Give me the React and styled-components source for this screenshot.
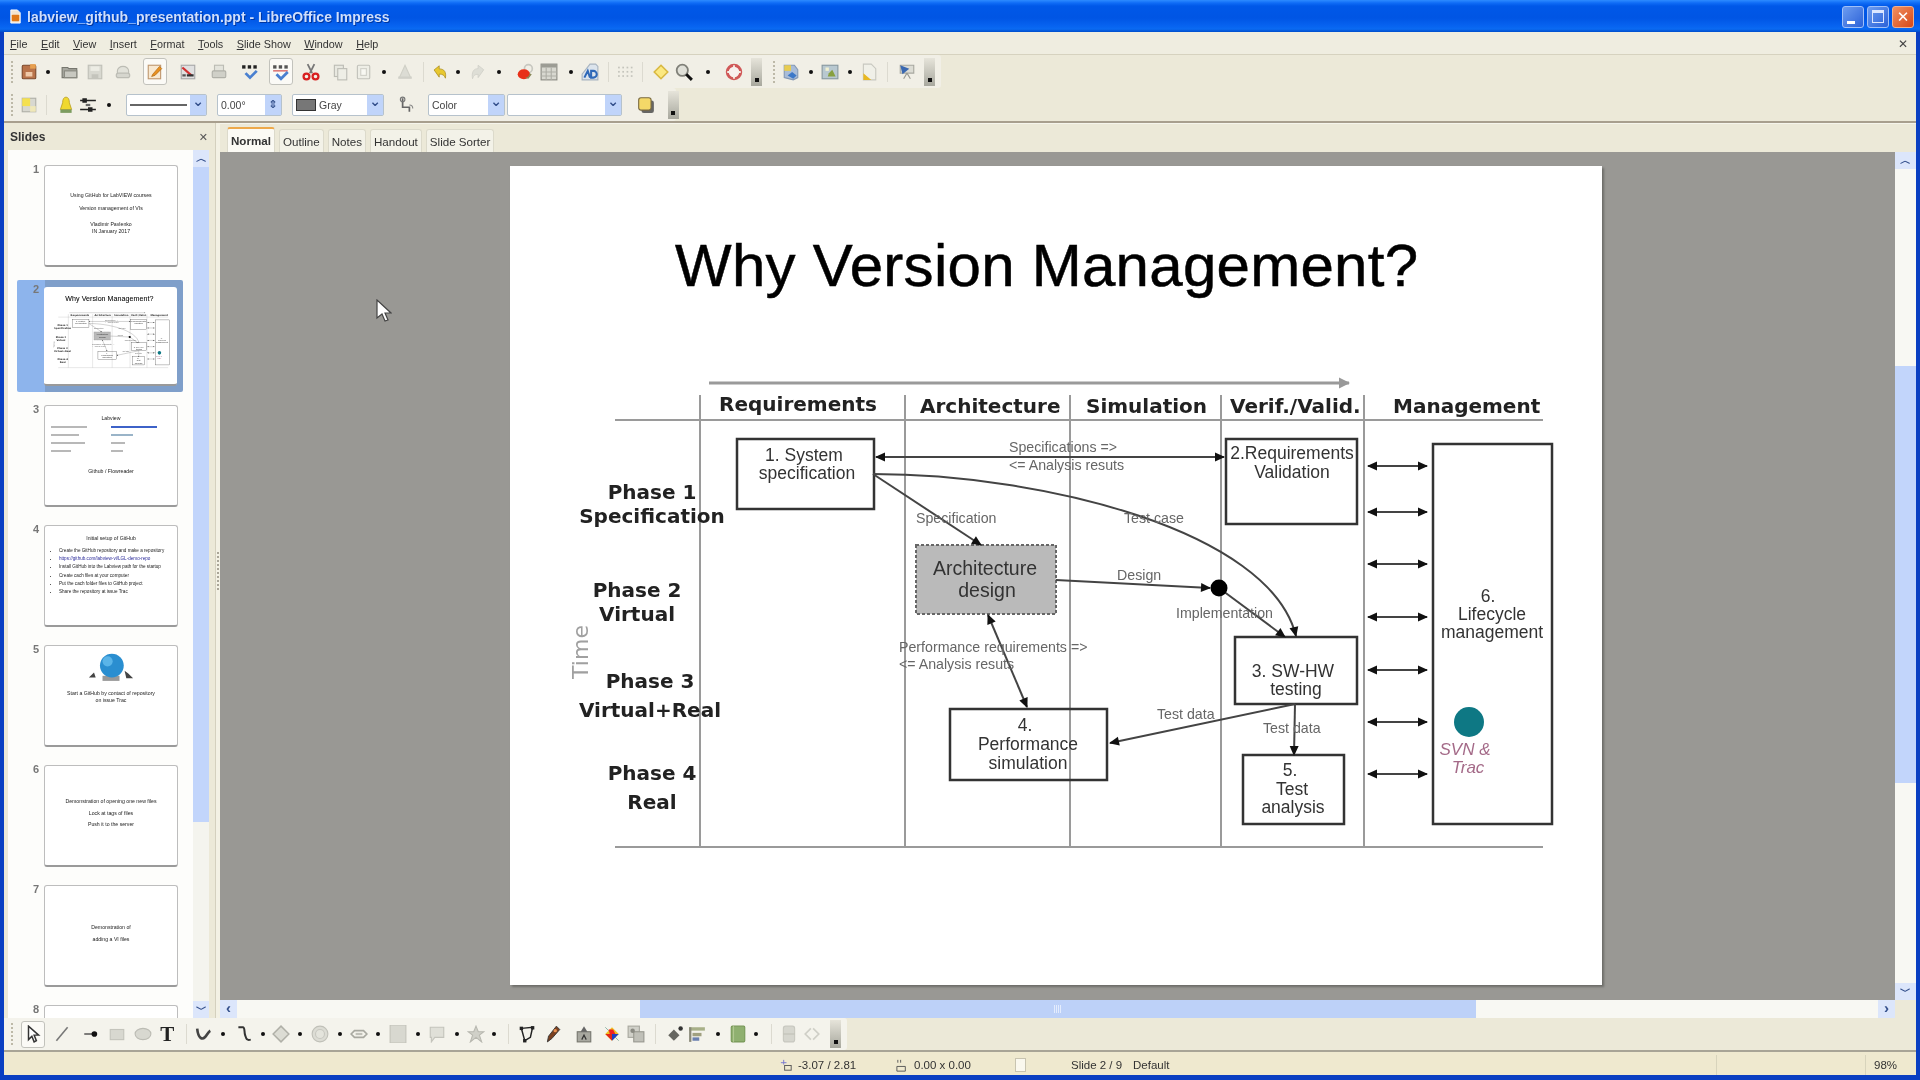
import React from "react";
import styled, { createGlobalStyle } from "styled-components";

const GlobalStyle = createGlobalStyle`
  html, body { margin: 0; padding: 0; background: #0a3fc2; overflow: hidden; }
  * { box-sizing: border-box; }
`;

/* ---------- toolbar icons ---------- */

const icons = {
  new: <><rect x="2" y="2" width="12" height="12" rx="1" fill="#b9734a" stroke="#7d4a2d" /><rect x="5" y="8" width="6" height="4" fill="#f0c9a8" /><rect x="9" y="1" width="5" height="4" fill="#e8a050" /></>,
  open: <><path d="M1 4h5l1 1h7v8H1z" fill="#a8a8a0" stroke="#77776f" /><rect x="3" y="7" width="11" height="6" fill="#c8c8c0" stroke="#88887f" /></>,
  save: <><rect x="2" y="2" width="12" height="12" fill="#d8d8d0" stroke="#c0c0b8" /><rect x="4" y="3" width="8" height="4" fill="#ecece4" /><rect x="5" y="10" width="6" height="4" fill="#c4c4bc" /></>,
  mail: <><path d="M3 11V7a5 4 0 0 1 10 0v4z" fill="#e2e2da" stroke="#bcbcb4" /><rect x="2" y="9" width="12" height="4" rx="2" fill="#d6d6ce" stroke="#bcbcb4" /></>,
  edit: <><rect x="2" y="2" width="11" height="12" fill="#f8e8d0" stroke="#c09870" /><path d="M6 10l6-7 2 2-6 6-3 1z" fill="#e89020" stroke="#b06810" strokeWidth=".6" /></>,
  pdf: <><rect x="2" y="2" width="12" height="12" fill="#e0e0e0" stroke="#a8a8a8" /><path d="M3 4l8 7" stroke="#d03030" strokeWidth="2" /><rect x="7" y="10" width="6" height="2" fill="#333" /><rect x="3" y="10" width="3" height="2" fill="#555" /></>,
  print: <><rect x="4" y="2" width="8" height="6" fill="#e4e4dc" stroke="#bcbcb4" /><rect x="2" y="7" width="12" height="6" rx="1" fill="#d0d0c8" stroke="#b0b0a8" /></>,
  spell: <><rect x="1" y="2" width="3" height="3" fill="#222" /><rect x="6" y="2" width="3" height="3" fill="#222" /><rect x="11" y="2" width="3" height="3" fill="#222" /><path d="M4 9l4 4 6-6" stroke="#4a80d0" strokeWidth="2.5" fill="none" /></>,
  autospell: <><rect x="1" y="2" width="3" height="3" fill="#555" /><rect x="6" y="2" width="3" height="3" fill="#555" /><rect x="11" y="2" width="3" height="3" fill="#555" /><path d="M1 7h13" stroke="#d04040" /><path d="M4 10l4 4 6-6" stroke="#4a80d0" strokeWidth="2.5" fill="none" /></>,
  cut: <><path d="M5 1l4 8M11 1L7 9" stroke="#777" strokeWidth="1.6" /><circle cx="4" cy="12" r="2.6" fill="none" stroke="#d82020" strokeWidth="2" /><circle cx="12" cy="12" r="2.6" fill="none" stroke="#d82020" strokeWidth="2" /></>,
  copy: <><rect x="3" y="2" width="8" height="10" fill="#e8e8e0" stroke="#bdbdb5" /><rect x="6" y="5" width="8" height="10" fill="#eeeee6" stroke="#bdbdb5" /></>,
  paste: <><rect x="3" y="2" width="11" height="12" rx="1" fill="#eeeee6" stroke="#c2c2ba" /><rect x="6" y="5" width="5" height="6" fill="#f8f8f2" stroke="#d0d0c8" /></>,
  brush: <><path d="M8 2l5 11H3z" fill="#dcdcd4" stroke="#cfcfc6" /><rect x="2" y="12" width="12" height="2" fill="#d0d0c8" /></>,
  undo: <><path d="M2 6l5-4v3c5 0 7 3 6 9-1-3-3-4-6-4v3z" fill="#e8c830" stroke="#a88a18" strokeWidth=".7" /></>,
  redo: <><path d="M14 6L9 2v3C5 5 3 8 4 14c1-3 2-4 5-4v3z" fill="#deded6" stroke="#cfcfc7" strokeWidth=".7" /></>,
  chart: <><circle cx="11" cy="5" r="3.5" fill="none" stroke="#c8c8c0" strokeWidth="1.5" /><ellipse cx="7" cy="10" rx="5.5" ry="4.5" fill="#e83018" /><path d="M8 13a5 4 0 0 0 4-4l2 1-3 4z" fill="#888858" /></>,
  table: <><rect x="1" y="1" width="14" height="14" fill="#d8d8d0" stroke="#8c8c84" /><rect x="1" y="1" width="14" height="3" fill="#9c9c94" /><path d="M5.5 4v11M10 4v11M1 8h14M1 11.500h14" stroke="#aeaea6" /></>,
  fontwork: <><path d="M8 1h5l2 2v12H1v-5z" fill="#dce4ec" stroke="#a8b4c0" /><path d="M3 13l3-6 2 6M9 13V7h2a3 3 0 0 1 0 6z" stroke="#2e68b8" strokeWidth="1.8" fill="none" /></>,
  grid: <>{[3, 7, 11].flatMap((y) => [2, 6, 10, 14].map((x) => <rect key={`${x}-${y}`} x={x - 1} y={y} width="1.6" height="1.6" fill="#c4c4bc" />))}</>,
  diamond: <path d="M8 2l6 6-6 6-6-6z" fill="#fbe880" stroke="#d8b840" strokeWidth="1.4" />,
  zoom: <><circle cx="6.5" cy="6.500" r="5" fill="#e0e0d8" stroke="#808078" strokeWidth="1.6" /><path d="M10 10l5 5" stroke="#111" strokeWidth="2.6" /></>,
  help: <><circle cx="8" cy="8" r="6" fill="#f8f0ee" stroke="#d05858" strokeWidth="2.6" /><path d="M8 2v3M8 11v3M2 8h3M11 8h3" stroke="#f4f0e8" strokeWidth="1.6" /></>,
  gallery: <><path d="M2 2h9l3 4v7l-4 2-8-2z" fill="#a8bcd8" stroke="#8498b4" /><path d="M2 2h6v5H2z" fill="#e8cc50" /><path d="M5 11l4-3 4 3-3 3z" fill="#3c78c8" /></>,
  picture: <><rect x="1" y="2" width="14" height="12" fill="#b8c8d0" stroke="#8898a0" /><path d="M7 9l3-3 3 6H6z" fill="#88a040" /><rect x="4" y="4" width="3" height="3" fill="#f0f0d0" /></>,
  docFold: <><path d="M3 1h7l4 4v10H3z" fill="#f0f0e8" stroke="#c8c8c0" /><path d="M3 15V9l7 6z" fill="#e8b820" /></>,
  present: <><path d="M2 2h12v7H2z" fill="#dcdcd4" stroke="#a8a8a0" /><path d="M2 2l8 3-6 5z" fill="#3a68b0" /><path d="M8 9l-3 5M8 9l3 5" stroke="#9a9a92" /></>,
  area: <><rect x="2" y="2" width="12" height="12" fill="#d8d8d0" stroke="#b0b0a8" /><rect x="2" y="2" width="7" height="7" fill="#f4e050" /><rect x="9" y="9" width="5" height="5" fill="#f0e8b8" /></>,
  bell: <><path d="M8 1c2 0 3 2 3 5l2 6H3l2-6c0-3 1-5 3-5z" fill="#f0d830" stroke="#b89c18" strokeWidth=".7" /><rect x="3" y="12" width="10" height="3" fill="#7c9c60" /></>,
  sliders: <><path d="M1 4h14M1 12h14" stroke="#222" strokeWidth="1.400" /><rect x="3" y="2" width="4" height="4" fill="#222" /><rect x="8" y="10" width="4" height="4" fill="#222" /><rect x="6" y="7" width="4" height="2" fill="#666" /></>,
  rotate: <><path d="M5 2v8h6v4" stroke="#666" strokeWidth="1.500" fill="none" /><circle cx="5" cy="3" r="2" fill="none" stroke="#777" /><path d="M11 8a3 3 0 0 1 3 3" stroke="#888" fill="none" /></>,
  shadow: <><rect x="4" y="4" width="11" height="11" rx="2" fill="#444" opacity=".8" /><rect x="1.500" y="1.500" width="11" height="11" rx="2" fill="#f4d868" stroke="#7a6a40" /></>,
  pointer: <path d="M4 1v12l3-3 2 5 2-1-2-5h4z" fill="#fff" stroke="#333" strokeWidth="1.300" />,
  line: <path d="M3 14L13 2" stroke="#777" strokeWidth="1.400" />,
  arrowLine: <><path d="M2 8h8" stroke="#444" strokeWidth="1.200" /><circle cx="11" cy="8" r="2.500" fill="#111" /></>,
  rect: <rect x="2" y="4" width="12" height="9" fill="#d8d8d0" stroke="#c4c4bc" />,
  ellipse: <ellipse cx="8" cy="8" rx="7" ry="5" fill="#d8d8d0" stroke="#bcbcb4" />,
  curve: <path d="M2 3c1 10 5 10 7 8s3-5 5-6" stroke="#444" strokeWidth="2.400" fill="none" />,
  connector: <path d="M3 2h4c2 0 1 4 2 7s1 5 5 4" stroke="#333" strokeWidth="1.800" fill="none" />,
  shape: <path d="M8 1l7 7-7 7-7-7z" fill="#dcdcd4" stroke="#b0b0a8" strokeWidth="1.300" />,
  symbol: <><circle cx="8" cy="8" r="7" fill="#dcdcd4" stroke="#c0c0b8" /><circle cx="8" cy="8" r="4" fill="#e4e4dc" stroke="#c8c8c0" /></>,
  arrows: <><path d="M1 8l3-3h8l3 3-3 3H4z" fill="none" stroke="#a8a8a0" strokeWidth="1.500" /><path d="M5 8h6" stroke="#c0c0b8" strokeWidth="2" /></>,
  flow: <rect x="1" y="0" width="14" height="16" fill="#d8d8d0" stroke="#c4c4bc" />,
  callout: <path d="M2 2h12v9H6l-3 4v-4H2z" fill="#e0e0d8" stroke="#c4c4bc" />,
  star: <path d="M8 1l2 5h5l-4 3 2 6-5-4-5 4 2-6-4-3h5z" fill="#d0d0c8" stroke="#b8b8b0" />,
  points: <><path d="M3 3l10-1-2 9-5 3z" fill="none" stroke="#222" strokeWidth="1.300" /><rect x="1.500" y="1.500" width="3" height="3" fill="#222" /><rect x="11.500" y="1" width="3" height="3" fill="#222" /><rect x="4.500" y="12.500" width="3" height="3" fill="#222" /></>,
  pen: <><path d="M11 1l3 3-7 8-4 3 1-5z" fill="#7a4020" stroke="#333" strokeWidth=".8" /><circle cx="10" cy="5" r="1.500" fill="#e89050" /></>,
  extrude: <><rect x="2" y="6" width="12" height="9" fill="#a8a8a0" stroke="#77776f" /><path d="M8 1l3 5H5z" fill="#666" /><path d="M6 13l2-4 2 4" stroke="#333" fill="none" /></>,
  color: <><path d="M2 2l12 12" stroke="#88b0a0" strokeWidth=".8" /><path d="M8 2l6 6-6 6-6-6z" fill="#f0c020" /><path d="M8 8l6 0-6 6z" fill="#2040c0" /><path d="M2 8h6v6z" fill="#e02818" /><path d="M5 4l4 0 2 4H6z" fill="#f02020" /></>,
  group: <><rect x="1" y="1" width="10" height="10" fill="#d0d0c8" stroke="#a8a8a0" /><rect x="6" y="6" width="9" height="9" fill="#c0c0b8" stroke="#989890" /><circle cx="5" cy="5" r="2" fill="#8a8a82" /></>,
  align: <><path d="M2 9l5-5 5 5-5 5z" fill="#666660" /><circle cx="13" cy="3" r="2" fill="#333" /></>,
  flag: <><rect x="1" y="2" width="14" height="3" fill="#a8b088" /><rect x="1" y="2" width="2" height="13" fill="#888878" /><rect x="4" y="7" width="8" height="3" fill="#a0a080" /><rect x="4" y="11" width="6" height="3" fill="#6a80b0" /></>,
  arrange: <><rect x="2" y="1" width="12" height="14" rx="1" fill="#8fb070" stroke="#789858" /><path d="M4 1v14" stroke="#b0c890" /></>,
  ghost: <><rect x="3" y="1" width="10" height="14" rx="2" fill="#d6d6ce" stroke="#c8c8c0" /><path d="M3 8h10" stroke="#c0c0b8" /></>,
  brackets: <><path d="M7 3L2 8l5 5M9 3l5 5-5 5" fill="none" stroke="#cfcfc7" strokeWidth="1.500" /></>,
};

const Icon = ({ kind }) => (
  <IconSvg viewBox="0 0 16 16" aria-hidden="true">
    {icons[kind]}
  </IconSvg>
);

const IconSvg = styled.svg`
  width: 18px;
  height: 18px;
  display: block;
`;

const toolbarOne = [
  ["grip", 10], ["new", 28], ["dot", 48], ["open", 68], ["save", 95], ["mail", 121],
  ["edit", 155, true], ["pdf", 189], ["print", 217], ["spell", 253], ["autospell", 278, true],
  ["cut", 313], ["copy", 340], ["paste", 365], ["dot", 383], ["brush", 406], ["sep", 425],
  ["undo", 438], ["dot", 458], ["redo", 477], ["dot", 497], ["chart", 525], ["table", 551],
  ["dot", 570], ["fontwork", 591], ["sep", 608], ["grid", 625], ["sep", 642], ["diamond", 659],
  ["zoom", 685], ["dot", 705], ["help", 735], ["tail", 760], ["grip", 772], ["gallery", 791],
  ["dot", 811], ["picture", 830], ["dot", 850], ["docFold", 869], ["sep", 887], ["present", 905],
  ["tail", 931],
];

const drawToolbar = [
  ["grip", 10], ["pointer", 29, true], ["line", 64], ["arrowLine", 92], ["rect", 116], ["ellipse", 143],
  ["text", 169], ["sep", 188], ["curve", 201], ["dot", 223], ["connector", 246], ["dot", 262], ["shape", 281],
  ["dot", 300], ["symbol", 320], ["dot", 340], ["arrows", 359], ["dot", 378], ["flow", 398], ["dot", 418],
  ["callout", 437], ["dot", 457], ["star", 475], ["dot", 496], ["sep", 507], ["points", 524], ["pen", 552],
  ["extrude", 585], ["color", 612], ["group", 638], ["sep", 655], ["align", 672], ["flag", 699], ["dot", 718],
  ["arrange", 738], ["dot", 757], ["sep", 772], ["ghost", 786], ["brackets", 812], ["tail", 837],
];

// turn a list of icon centres into flow slots, each one reaching to the midpoints of its neighbours
const slotWidths = (items, start) =>
  items.map(([, c], i) => {
    const left = i === 0 ? start : (items[i - 1][1] + c) / 2;
    const right = i === items.length - 1 ? c + 10 : (c + items[i + 1][1]) / 2;
    return right - left;
  });

const ToolItems = ({ items, start = 4 }) => {
  const widths = slotWidths(items, start);
  return items.map(([kind, , selected], i) => (
    <Slot key={i} $w={widths[i]}>
      {kind === "grip" && <Grip />}
      {kind === "dot" && <DropDot />}
      {kind === "sep" && <Sep />}
      {kind === "tail" && <Tail />}
      {kind === "text" && <BigT>T</BigT>}
      {icons[kind] &&
        (selected ? (
          <Selected><Icon kind={kind} /></Selected>
        ) : (
          <Icon kind={kind} />
        ))}
    </Slot>
  ));
};

/* ---------- the slide itself ---------- */

const columnHeads = [
  ["Requirements", 719, 411],
  ["Architecture", 920, 413],
  ["Simulation", 1086, 413],
  ["Verif./Valid.", 1230, 413],
  ["Management", 1393, 413],
];

const phaseLabels = [
  ["Phase 1", 652, 499], ["Specification", 652, 523],
  ["Phase 2", 637, 597], ["Virtual", 637, 621],
  ["Phase 3", 650, 688], ["Virtual+Real", 650, 717],
  ["Phase 4", 652, 780], ["Real", 652, 809],
];

const boxes = [
  [737, 439, 137, 70], [950, 709, 157, 71], [1226, 439, 131, 85],
  [1235, 637, 122, 67], [1243, 755, 101, 69], [1433, 444, 119, 380],
];

const boxLabels = [
  ["1. System", 804, 461], ["specification", 807, 479],
  ["4.", 1025, 731], ["Performance", 1028, 750], ["simulation", 1028, 769],
  ["2.Requirements", 1292, 459], ["Validation", 1292, 478],
  ["3. SW-HW", 1293, 677], ["testing", 1296, 695],
  ["5.", 1290, 776], ["Test", 1292, 795], ["analysis", 1293, 813],
  ["6.", 1488, 602], ["Lifecycle", 1492, 620], ["management", 1492, 638],
];

const edgeLabels = [
  ["Specifications =>", 1009, 452], ["<= Analysis resuts", 1009, 470],
  ["Specification", 916, 523], ["Test case", 1124, 523], ["Design", 1117, 580],
  ["Implementation", 1176, 618], ["Performance requirements =>", 899, 652],
  ["<= Analysis resuts", 899, 669], ["Test data", 1157, 719], ["Test data", 1263, 733],
];

const syncRows = [466, 512, 564, 617, 670, 722, 774];

const SlideArt = () => (
  <ArtSvg viewBox="510 166 1092 819">
    <defs>
      <marker id="head" markerUnits="userSpaceOnUse" markerWidth="12" markerHeight="12" refX="10" refY="6" orient="auto-start-reverse">
        <path d="M1 1.500L11 6 1 10.500z" fill="#111" />
      </marker>
      <marker id="grayHead" markerUnits="userSpaceOnUse" markerWidth="14" markerHeight="14" refX="11" refY="7" orient="auto">
        <path d="M1 1.500L12 7 1 12.500z" fill="#999" />
      </marker>
    </defs>

    <TitleText x="675" y="286" textLength="743">Why Version Management?</TitleText>

    <GridLine x1="709" y1="383" x2="1349" y2="383" strokeWidth="3" markerEnd="url(#grayHead)" />
    <GridLine x1="615" y1="420" x2="1543" y2="420" />
    <GridLine x1="615" y1="847" x2="1543" y2="847" />
    {[700, 905, 1070, 1221, 1364].map((x) => (
      <GridLine key={x} x1={x} y1="395" x2={x} y2="847" />
    ))}

    {columnHeads.map(([t, x, y]) => (
      <HeadText key={t} x={x} y={y}>{t}</HeadText>
    ))}
    {phaseLabels.map(([t, x, y]) => (
      <PhaseText key={t} x={x} y={y}>{t}</PhaseText>
    ))}
    <TimeText transform="translate(588 652) rotate(-90)">Time</TimeText>

    {boxes.map(([x, y, w, h]) => (
      <BoxRect key={x} x={x} y={y} width={w} height={h} />
    ))}
    <DashedRect x="916" y="545" width="140" height="69" />
    <ArchText x="985" y="575">Architecture</ArchText>
    <ArchText x="987" y="597">design</ArchText>

    <Edge x1="876" y1="457" x2="1224" y2="457" markerStart="url(#head)" markerEnd="url(#head)" />
    <EdgeCurve d="M873 474C1040 474 1270 530 1296 636" markerEnd="url(#head)" />
    <Edge x1="873" y1="474" x2="981" y2="545" markerEnd="url(#head)" />
    <Edge x1="1056" y1="580" x2="1210" y2="588" markerEnd="url(#head)" />
    <Edge x1="1219" y1="588" x2="1285" y2="637" markerEnd="url(#head)" />
    <Edge x1="988" y1="615" x2="1027" y2="707" markerStart="url(#head)" markerEnd="url(#head)" />
    <Edge x1="1295" y1="704" x2="1110" y2="743" markerEnd="url(#head)" />
    <Edge x1="1295" y1="704" x2="1294" y2="755" markerEnd="url(#head)" />
    {syncRows.map((y) => (
      <Edge key={y} x1="1368" y1={y} x2="1427" y2={y} markerStart="url(#head)" markerEnd="url(#head)" />
    ))}
    <circle cx="1219" cy="588" r="8.500" fill="#000" />
    <circle cx="1469" cy="722" r="15" fill="#0e7884" />

    {boxLabels.map(([t, x, y]) => (
      <BoxText key={t} x={x} y={y}>{t}</BoxText>
    ))}
    {edgeLabels.map(([t, x, y], i) => (
      <EdgeText key={i} x={x} y={y}>{t}</EdgeText>
    ))}
    <TracText x="1465" y="755">SVN &amp;</TracText>
    <TracText x="1468" y="773">Trac</TracText>
  </ArtSvg>
);

/* ---------- thumbnails ---------- */

const Thumb = ({ n, selected, children }) => (
  <ThumbRow $selected={selected}>
    <ThumbNumber>{n}</ThumbNumber>
    <ThumbCard $selected={selected}>{children}</ThumbCard>
  </ThumbRow>
);

const Globe = () => (
  <GlobeSvg viewBox="0 0 64 40">
    <path d="M6 30l6-6 2 6zM48 22l4 3 6 6-8 0z" fill="#444" />
    <rect x="22" y="28" width="20" height="6" fill="#999" />
    <circle cx="33" cy="16" r="14" fill="#2a8ed0" />
    <circle cx="28" cy="11" r="6" fill="#5ab4e8" />
  </GlobeSvg>
);

const App = () => (
  <Window>
    <GlobalStyle />
    <TitleBar>
      <AppIcon viewBox="0 0 16 16">
        <path d="M3 1h7l3 3v11H3z" fill="#f4e4d0" stroke="#fff" />
        <rect x="4" y="6" width="8" height="7" rx="1" fill="#e07818" />
      </AppIcon>
      <TitleLabel>labview_github_presentation.ppt - LibreOffice Impress</TitleLabel>
      <WindowButtons>
        <WindowButton><MinGlyph /></WindowButton>
        <WindowButton><MaxGlyph /></WindowButton>
        <WindowButton $close>✕</WindowButton>
      </WindowButtons>
    </TitleBar>

    <Body>
      <MenuBar>
        {["File", "Edit", "View", "Insert", "Format", "Tools", "Slide Show", "Window", "Help"].map((m) => (
          <MenuItem key={m}><u>{m[0]}</u>{m.slice(1)}</MenuItem>
        ))}
        <MenuClose>✕</MenuClose>
      </MenuBar>

      <ToolRow>
        <ToolStrip><ToolItems items={toolbarOne} /></ToolStrip>
      </ToolRow>

      <ToolRow $last>
        <ToolStrip>
          <ToolItems items={[["grip", 10], ["area", 28], ["sep", 48], ["bell", 63], ["sliders", 90], ["dot", 108]]} />
          <Combo $w={81} $ml={8}><LineSample /><ComboArrow>⌄</ComboArrow></Combo>
          <Combo $w={65} $ml={10}><ComboText>0.00°</ComboText><SpinArrow>⇕</SpinArrow></Combo>
          <Combo $w={92} $ml={10}><GraySwatch /><ComboText>Gray</ComboText><ComboArrow>⌄</ComboArrow></Combo>
          <Slot $w={44}><Icon kind="rotate" /></Slot>
          <Combo $w={77}><ComboText>Color</ComboText><ComboArrow>⌄</ComboArrow></Combo>
          <Combo $w={115} $ml={2}><ComboText /><ComboArrow>⌄</ComboArrow></Combo>
          <Slot $w={48}><Icon kind="shadow" /></Slot>
          <Slot $w={6}><Tail /></Slot>
        </ToolStrip>
      </ToolRow>

      <Main>
        <SlidesPanel>
          <PanelHeader>
            <PanelTitle>Slides</PanelTitle>
            <PanelClose>✕</PanelClose>
          </PanelHeader>
          <PanelBody>
            <ThumbList>
              <Thumb n={1}>
                <ThumbBlock $top={26} $gap={7}>
                  <ThumbLine>Using GitHub for LabVIEW courses</ThumbLine>
                  <ThumbLine>Version management of VIs</ThumbLine>
                  <ThumbPair>
                    <ThumbLine>Vladimir Pavlenko</ThumbLine>
                    <ThumbLine>IN January 2017</ThumbLine>
                  </ThumbPair>
                </ThumbBlock>
              </Thumb>
              <Thumb n={2} selected><SlideArt /></Thumb>
              <Thumb n={3}>
                <ThumbBlock $top={9}>
                  <ThumbLine>Labview</ThumbLine>
                </ThumbBlock>
                <ThumbSplit>
                  <ThumbBars>
                    <ThumbBar $w={36} /><ThumbBar $w={28} /><ThumbBar $w={34} /><ThumbBar $w={20} />
                  </ThumbBars>
                  <ThumbBars>
                    <ThumbBar $w={46} $color="#3d62c8" />
                    <ThumbBar $w={22} $color="#9ab4c8" />
                    <ThumbBar $w={14} />
                    <ThumbBar $w={12} />
                  </ThumbBars>
                </ThumbSplit>
                <ThumbBlock $top={16}>
                  <ThumbLine>Github / Flowreader</ThumbLine>
                </ThumbBlock>
              </Thumb>
              <Thumb n={4}>
                <ThumbBlock $top={9}>
                  <ThumbLine>Initial setup of GitHub</ThumbLine>
                </ThumbBlock>
                <ThumbBullets>
                  <li>Create the GitHub repository and make a repository</li>
                  <li><ThumbLink>https://github.com/labview-vi/LGL-demo-repo</ThumbLink></li>
                  <li>Install GitHub into the Labview path for the startup</li>
                  <li>Create cach files at your computer</li>
                  <li>Put the cach folder files to GitHub project</li>
                  <li>Share the repository at issue Trac</li>
                </ThumbBullets>
              </Thumb>
              <Thumb n={5}>
                <Globe />
                <ThumbBlock $top={-2} $gap={1}>
                  <ThumbLine>Start a GitHub by contact of repository</ThumbLine>
                  <ThumbLine>on issue Trac</ThumbLine>
                </ThumbBlock>
              </Thumb>
              <Thumb n={6}>
                <ThumbBlock $top={32} $gap={5.5}>
                  <ThumbLine>Demonstration of opening one new files</ThumbLine>
                  <ThumbLine>Lock at tags of files</ThumbLine>
                  <ThumbLine>Push it to the server</ThumbLine>
                </ThumbBlock>
              </Thumb>
              <Thumb n={7}>
                <ThumbBlock $top={38} $gap={6}>
                  <ThumbLine>Demonstration of</ThumbLine>
                  <ThumbLine>adding a VI files</ThumbLine>
                </ThumbBlock>
              </Thumb>
              <Thumb n={8} />
            </ThumbList>
            <PanelScroll>
              <ScrollButton>︿</ScrollButton>
              <ScrollThumb $h={655} />
              <ScrollRest />
              <ScrollButton>﹀</ScrollButton>
            </PanelScroll>
          </PanelBody>
        </SlidesPanel>

        <Splitter><SplitterGrip /></Splitter>

        <Editor>
          <TabRow>
            <Tab $active>Normal</Tab>
            <Tab>Outline</Tab>
            <Tab>Notes</Tab>
            <Tab>Handout</Tab>
            <Tab>Slide Sorter</Tab>
          </TabRow>
          <EditorMiddle>
            <Viewport>
              <Slide><SlideArt /></Slide>
            </Viewport>
            <EditorScroll>
              <ScrollButton>︿</ScrollButton>
              <ScrollGap $h={197} />
              <ScrollThumb $h={417} />
              <ScrollRest />
              <ScrollButton>﹀</ScrollButton>
            </EditorScroll>
          </EditorMiddle>
          <HScrollRow>
            <HScrollTrack>
              <HButton>‹</HButton>
              <HGap $w={404} />
              <HThumb><HThumbGrip /></HThumb>
              <HGap $w={403} />
              <HButton>›</HButton>
            </HScrollTrack>
          </HScrollRow>
        </Editor>
      </Main>

      <DrawBar>
        <DrawStrip><ToolItems items={drawToolbar} /></DrawStrip>
      </DrawBar>

      <StatusBar>
        <StatusCell $w={775} />
        <StatusCell $w={116}><PosGlyph viewBox="0 0 16 16"><path d="M5 2v5M2 5h6" stroke="#7878d0" /><rect x="6" y="8" width="7" height="5" fill="none" stroke="#555" /></PosGlyph>-3.07 / 2.81</StatusCell>
        <StatusCell $w={120}><PosGlyph viewBox="0 0 16 16"><path d="M3 2v3M6 2v3M2 9h9v5H2z" stroke="#555" fill="none" /></PosGlyph>0.00 x 0.00</StatusCell>
        <StatusCell $w={56}><DocGlyph /></StatusCell>
        <StatusCell $w={62}>Slide 2 / 9</StatusCell>
        <StatusCell $w={583}>Default</StatusCell>
        <StatusCell $w={149} $line />
        <StatusCell $line>98%</StatusCell>
      </StatusBar>
    </Body>

    <Cursor viewBox="0 0 16 24">
      <path d="M1 1v18l5-4 3 7 3-1-3-7h6z" fill="#fff" stroke="#444" strokeWidth="1.200" />
    </Cursor>
  </Window>
);

export default App;

/* ---------- styles ---------- */

const ui = `"Liberation Sans", Arial, sans-serif`;
const wide = `"DejaVu Sans", Verdana, sans-serif`;

const Window = styled.div`
  position: relative;
  width: 1920px;
  height: 1080px;
  display: flex;
  flex-direction: column;
  overflow: hidden;
  background: #0a3fc2;
  font-family: ${ui};
  filter: blur(0.55px);
`;

const TitleBar = styled.div`
  flex: 0 0 32px;
  display: flex;
  align-items: center;
  padding: 1px 6px 0 8px;
  background: linear-gradient(to bottom, #2d8bff 0, #0f6cf6 3px, #0058e8 6px, #0055e4 18px, #0763f0 26px, #0a6af2 29px, #004ecb 32px);
`;

const AppIcon = styled.svg`
  width: 15px;
  height: 17px;
  margin-right: 4px;
`;

const TitleLabel = styled.span`
  flex: 1;
  color: #cfdffc;
  font-size: 14px;
  font-weight: bold;
  white-space: nowrap;
  text-shadow: 1px 1px 0 #0036a0;
`;

const WindowButtons = styled.div`
  display: flex;
  gap: 3px;
`;

const WindowButton = styled.div`
  position: relative;
  width: 22px;
  height: 22px;
  border-radius: 3px;
  border: 1px solid ${({ $close }) => ($close ? "#f0b090" : "#a0c0f8")};
  background: ${({ $close }) =>
    $close ? "linear-gradient(135deg,#f09060,#d84818)" : "linear-gradient(135deg,#6c9cf0,#2c62d8)"};
  color: #fff;
  font-size: 15px;
  font-weight: bold;
  text-align: center;
  line-height: 20px;
  font-family: "DejaVu Sans", sans-serif;
`;

const MinGlyph = styled.i`
  position: absolute;
  left: 4px;
  bottom: 3px;
  width: 8px;
  height: 3px;
  background: #fff;
`;

const MaxGlyph = styled.i`
  position: absolute;
  left: 4px;
  top: 3px;
  width: 12px;
  height: 13px;
  border: 1px solid #dbe6ff;
  border-top-width: 3px;
`;

const Body = styled.div`
  flex: 1;
  min-height: 0;
  margin: 0 4px 5px;
  display: flex;
  flex-direction: column;
  background: #ece9d8;
`;

const MenuBar = styled.div`
  flex: 0 0 23px;
  display: flex;
  align-items: center;
  gap: 13.5px;
  padding: 1px 8px 0 6px;
  background: #efede0;
  border-bottom: 1px solid #d6d2bf;
`;

const MenuItem = styled.span`
  font-size: 10.8px;
  color: #333;
`;

const MenuClose = styled.span`
  margin-left: auto;
  font-size: 12px;
  color: #444;
  font-family: "DejaVu Sans", sans-serif;
`;

const ToolRow = styled.div`
  flex: 0 0 ${({ $last }) => ($last ? "35px" : "33px")};
  display: flex;
  background: #ece9d8;
  border-bottom: ${({ $last }) => ($last ? "2px solid #a89f8e" : "none")};
`;

const ToolStrip = styled.div`
  display: flex;
  align-items: center;
  background: #f1efe6;
  border-radius: 0 3px 3px 0;
`;

const Slot = styled.div`
  flex: 0 0 ${({ $w }) => $w}px;
  width: ${({ $w }) => $w}px;
  height: 100%;
  display: flex;
  align-items: center;
  justify-content: center;
`;

const Selected = styled.div`
  flex: none;
  width: 24px;
  height: 27px;
  display: flex;
  align-items: center;
  justify-content: center;
  background: #fbfaf6;
  border: 1px solid #c2c2bc;
  border-radius: 3px;
`;

const Grip = styled.i`
  width: 2px;
  height: 22px;
  background: repeating-linear-gradient(to bottom, #bdb9a8 0 2px, transparent 2px 4px);
`;

const DropDot = styled.i`
  width: 4px;
  height: 4px;
  border-radius: 50%;
  background: #111;
`;

const Sep = styled.i`
  width: 1px;
  height: 20px;
  background: #dcdad0;
`;

const Tail = styled.i`
  flex: 0 0 11px;
  width: 11px;
  height: 28px;
  display: flex;
  align-items: flex-end;
  justify-content: center;
  padding-bottom: 4px;
  background: linear-gradient(to bottom, #e6e4da, #a8a89e);

  &::after {
    content: "";
    width: 4px;
    height: 4px;
    background: #111;
  }
`;

const BigT = styled.span`
  font-family: "Liberation Serif", serif;
  font-size: 21px;
  font-weight: bold;
  color: #222;
`;

const Combo = styled.div`
  flex: 0 0 ${({ $w }) => $w}px;
  height: 22px;
  margin-left: ${({ $ml }) => $ml || 0}px;
  display: flex;
  align-items: center;
  background: #fff;
  border: 1px solid #b6c2cc;
  border-radius: 2px;
`;

const ComboText = styled.span`
  flex: 1;
  padding-left: 3px;
  font-size: 10.5px;
  color: #444;
`;

const ComboArrow = styled.span`
  flex: 0 0 16px;
  height: 100%;
  background: #c0d4fa;
  color: #34508c;
  font-size: 14px;
  font-weight: bold;
  line-height: 13px;
  text-align: center;
  font-family: "DejaVu Sans", sans-serif;
`;

const SpinArrow = styled(ComboArrow)`
  font-size: 11px;
  line-height: 20px;
`;

const LineSample = styled.i`
  flex: 1;
  height: 2px;
  margin: 0 3px;
  background: #666;
`;

const GraySwatch = styled.i`
  flex: 0 0 20px;
  height: 12px;
  margin-left: 3px;
  background: #777;
  border: 1px solid #333;
`;

const Main = styled.div`
  flex: 1;
  min-height: 0;
  display: flex;
  overflow: hidden;
`;

const SlidesPanel = styled.div`
  flex: 0 0 211px;
  min-height: 0;
  display: flex;
  flex-direction: column;
`;

const PanelHeader = styled.div`
  flex: 0 0 27px;
  display: flex;
  align-items: center;
  justify-content: space-between;
  padding: 1px 7px 0 6px;
`;

const PanelTitle = styled.span`
  font-size: 12px;
  font-weight: bold;
  color: #333;
`;

const PanelClose = styled.span`
  font-size: 11px;
  color: #555;
  font-family: "DejaVu Sans", sans-serif;
`;

const PanelBody = styled.div`
  flex: 1;
  min-height: 0;
  display: flex;
  margin-left: 4px;
  margin-right: 6px;
  background: #fdfdfb;
`;

const ThumbList = styled.div`
  flex: 1;
  min-width: 0;
  overflow: hidden;
  padding: 10px 0 0 9px;
`;

const ThumbRow = styled.div`
  position: relative;
  width: 166px;
  height: 112px;
  margin-bottom: 8px;
  padding: 5px 0 0 27px;
  border-radius: 2px;
  background: ${({ $selected }) =>
    $selected ? "linear-gradient(to right,#8db4ec 0 28px,#7f9fca 28px)" : "transparent"};
`;

const ThumbNumber = styled.span`
  position: absolute;
  left: 16px;
  top: 3px;
  font-size: 11px;
  font-weight: bold;
  color: #777;
`;

const ThumbCard = styled.div`
  display: flex;
  flex-direction: column;
  align-items: center;
  width: ${({ $selected }) => ($selected ? "133px" : "134px")};
  height: ${({ $selected }) => ($selected ? "99px" : "102px")};
  overflow: hidden;
  background: #fff;
  border: ${({ $selected }) => ($selected ? "none" : "1px solid #bdbdbd")};
  border-bottom: 2px solid #9a9a9a;
  border-radius: 3px;
  margin-top: ${({ $selected }) => ($selected ? "2px" : "0")};
`;

const ThumbBlock = styled.div`
  margin-top: ${({ $top }) => $top}px;
  display: flex;
  flex-direction: column;
  align-items: center;
  gap: ${({ $gap }) => ($gap === undefined ? 4 : $gap)}px;
`;

const ThumbPair = styled.div`
  margin-top: 3px;
  display: flex;
  flex-direction: column;
  align-items: center;
  gap: 1px;
`;

const ThumbLine = styled.span`
  font-size: 5.2px;
  line-height: 6px;
  color: #222;
  white-space: nowrap;
`;

const ThumbBullets = styled.ul`
  width: 100%;
  margin: 6px 0 0;
  padding: 0 4px 0 14px;
  font-size: 4.6px;
  line-height: 8.2px;
  color: #222;
  white-space: nowrap;
  overflow: hidden;
`;

const ThumbLink = styled.span`
  color: #2a2a9a;
`;

const ThumbSplit = styled.div`
  width: 100%;
  display: flex;
  justify-content: space-between;
  padding: 5px 6px 0;
`;

const ThumbBars = styled.div`
  width: 50%;
  display: flex;
  flex-direction: column;
  gap: 6px;
`;

const ThumbBar = styled.i`
  display: block;
  width: ${({ $w }) => $w}px;
  height: 2px;
  background: ${({ $color }) => $color || "#b8b8b8"};
`;

const GlobeSvg = styled.svg`
  width: 68px;
  height: 34px;
  margin-top: 6px;
  margin-bottom: 6px;
  flex: none;
`;

const PanelScroll = styled.div`
  flex: 0 0 16px;
  display: flex;
  flex-direction: column;
  background: #f4f4ee;
`;

const ScrollButton = styled.div`
  flex: 0 0 17px;
  background: #dce6fb;
  color: #34508c;
  font-size: 11px;
  font-weight: bold;
  line-height: 17px;
  text-align: center;
  overflow: hidden;
  font-family: "DejaVu Sans", sans-serif;
`;

const ScrollThumb = styled.div`
  flex: 0 0 ${({ $h }) => $h}px;
  background: #c2d5fb;
`;

const ScrollGap = styled.div`
  flex: 0 0 ${({ $h }) => $h}px;
`;

const ScrollRest = styled.div`
  flex: 1;
`;

const Splitter = styled.div`
  flex: 0 0 5px;
  display: flex;
  align-items: center;
  justify-content: center;
  background: #f3f1e4;
  border-left: 1px solid #d4d0be;
`;

const SplitterGrip = styled.i`
  width: 2px;
  height: 38px;
  background: repeating-linear-gradient(to bottom, #aaa698 0 2px, transparent 2px 4px);
`;

const Editor = styled.div`
  flex: 1;
  min-width: 0;
  min-height: 0;
  display: flex;
  flex-direction: column;
`;

const TabRow = styled.div`
  flex: 0 0 29px;
  display: flex;
  align-items: flex-end;
  gap: 4px;
  padding-left: 7px;
  border-top: 1px solid #f6f5ec;
`;

const Tab = styled.div`
  height: ${({ $active }) => ($active ? "25px" : "23px")};
  padding: 0 3px;
  display: flex;
  align-items: center;
  font-size: 11.6px;
  color: #333;
  font-weight: ${({ $active }) => ($active ? "bold" : "normal")};
  background: ${({ $active }) => ($active ? "#fbfaf4" : "#f3f2e8")};
  border: 1px solid #dcdacb;
  border-bottom: none;
  border-top: ${({ $active }) => ($active ? "2px solid #eea94a" : "1px solid #dcdacb")};
  border-radius: 3px 3px 0 0;
`;

const EditorMiddle = styled.div`
  flex: 1;
  min-height: 0;
  display: flex;
`;

const Viewport = styled.div`
  flex: 1;
  min-width: 0;
  padding: 14px 0 0 290px;
  background: #999894;
  overflow: hidden;
`;

const Slide = styled.div`
  width: 1092px;
  height: 819px;
  background: #fff;
  box-shadow: 2px 2px 2px #6e6e6a;
`;

const ArtSvg = styled.svg`
  display: block;
  width: 100%;
  height: 100%;
`;

const TitleText = styled.text`
  font-family: ${ui};
  font-size: 60px;
  fill: #000;
  stroke: #000;
  stroke-width: 0.5;
`;

const GridLine = styled.line`
  stroke: #9a9a9a;
  stroke-width: ${({ strokeWidth }) => strokeWidth || 2};
`;

const HeadText = styled.text`
  font-family: ${wide};
  font-weight: bold;
  font-size: 20px;
  fill: #222;
`;

const PhaseText = styled.text`
  font-family: ${wide};
  font-weight: bold;
  font-size: 20px;
  fill: #222;
  text-anchor: middle;
`;

const TimeText = styled.text`
  font-family: ${wide};
  font-size: 22px;
  fill: #a0a0a0;
  text-anchor: middle;
`;

const BoxRect = styled.rect`
  fill: none;
  stroke: #333;
  stroke-width: 2.5;
`;

const DashedRect = styled.rect`
  fill: #bababa;
  stroke: #666;
  stroke-width: 2;
  stroke-dasharray: 3 2;
`;

const ArchText = styled.text`
  font-family: ${ui};
  font-size: 19.5px;
  fill: #333;
  text-anchor: middle;
`;

const BoxText = styled.text`
  font-family: ${ui};
  font-size: 17.5px;
  fill: #333;
  text-anchor: middle;
`;

const EdgeText = styled.text`
  font-family: ${ui};
  font-size: 14.2px;
  fill: #666;
`;

const TracText = styled.text`
  font-family: ${ui};
  font-size: 17px;
  font-style: italic;
  fill: #a46a88;
  text-anchor: middle;
`;

const Edge = styled.line`
  fill: none;
  stroke: #444;
  stroke-width: 2;
`;

const EdgeCurve = styled.path`
  fill: none;
  stroke: #444;
  stroke-width: 2;
`;

const HScrollRow = styled.div`
  flex: 0 0 18px;
  display: flex;
  padding-right: 21px;
`;

const HScrollTrack = styled.div`
  flex: 1;
  display: flex;
  background: #f8f8f3;
`;

const HButton = styled.div`
  flex: 0 0 17px;
  background: #dce6fb;
  color: #34508c;
  font-size: 15px;
  font-weight: bold;
  line-height: 15px;
  text-align: center;
`;

const HGap = styled.div`
  flex: 1 1 ${({ $w }) => $w}px;
`;

const HThumb = styled.div`
  flex: 0 0 836px;
  display: flex;
  align-items: center;
  justify-content: center;
  background: #bdd1f8;
`;

const HThumbGrip = styled.i`
  width: 8px;
  height: 8px;
  background: repeating-linear-gradient(to right, #e4ecfd 0 1px, transparent 1px 2px);
`;

const EditorScroll = styled.div`
  flex: 0 0 21px;
  display: flex;
  flex-direction: column;
  background: #f8f8f3;
`;

const DrawBar = styled.div`
  flex: 0 0 34px;
  display: flex;
  background: #ece9d8;
  border-bottom: 2px solid #a8a496;
`;

const DrawStrip = styled(ToolStrip)`
  background: #f4f3ec;
`;

const StatusBar = styled.div`
  flex: 0 0 23px;
  display: flex;
  align-items: center;
  padding-top: 3px;
  background: #efe9cf;
  font-size: 11.5px;
  color: #333;
`;

const StatusCell = styled.div`
  flex: 0 0 ${({ $w }) => ($w ? `${$w}px` : "auto")};
  height: 100%;
  display: flex;
  align-items: center;
  gap: 4px;
  padding-left: ${({ $line }) => ($line ? "8px" : "0")};
  border-left: ${({ $line }) => ($line ? "1px solid #d8d4bc" : "none")};
  white-space: nowrap;
`;

const PosGlyph = styled.svg`
  width: 15px;
  height: 15px;
  flex: none;
`;

const DocGlyph = styled.i`
  width: 11px;
  height: 14px;
  background: #faf8ee;
  border: 1px solid #c8c4b0;
`;

const Cursor = styled.svg`
  position: absolute;
  left: 376px;
  top: 299px;
  width: 16px;
  height: 24px;
`;
